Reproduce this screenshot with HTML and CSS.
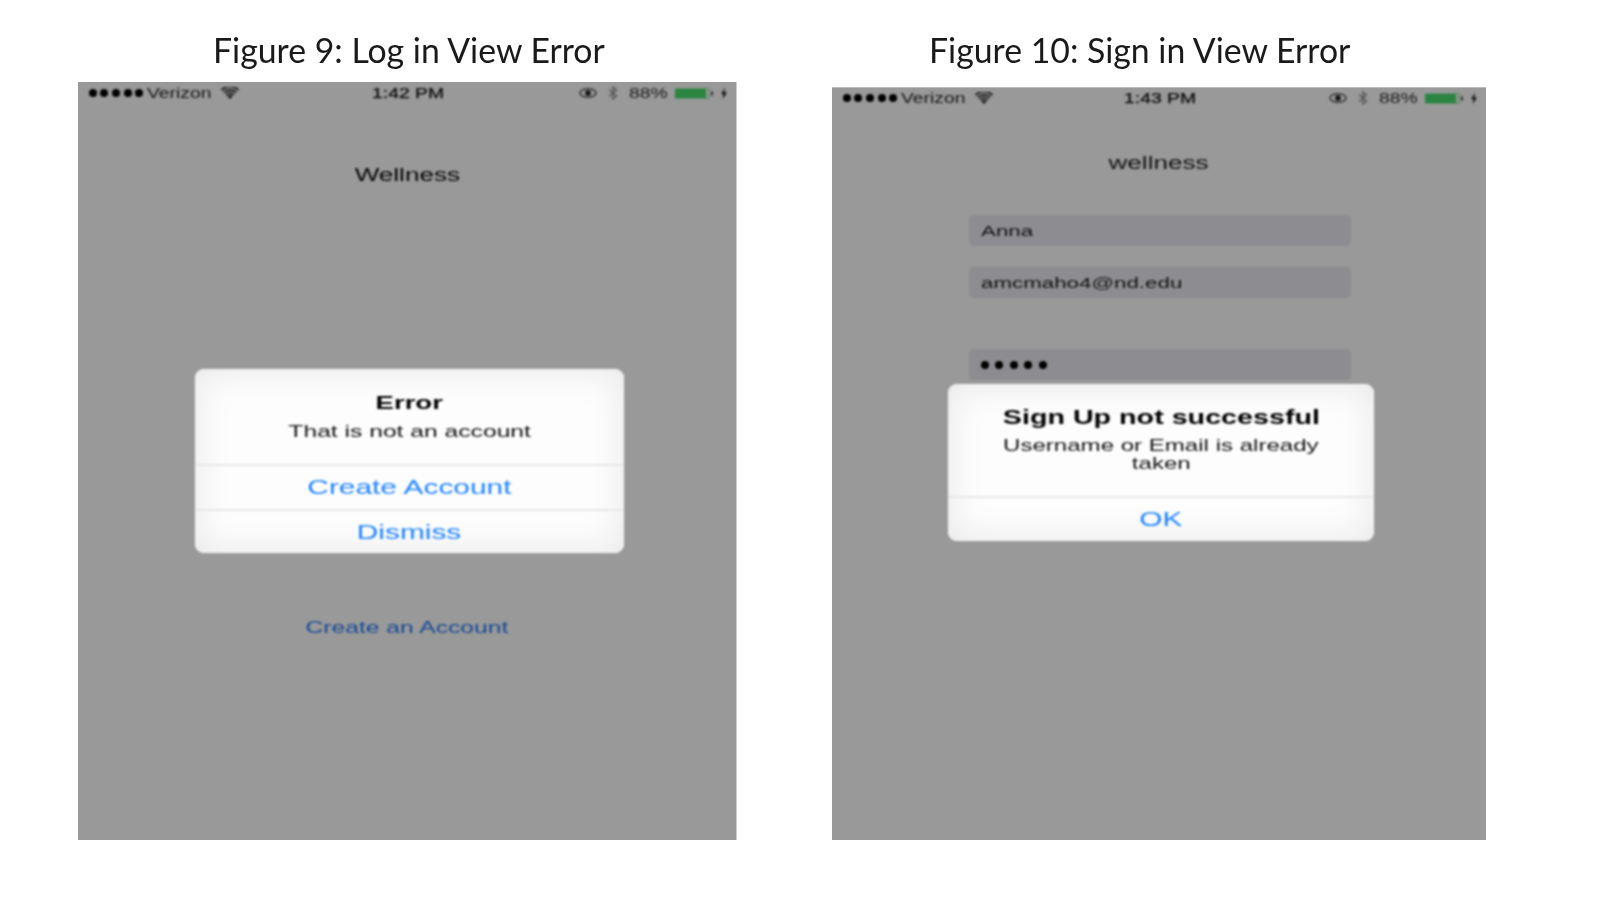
FILE: index.html
```html
<!DOCTYPE html>
<html lang="en">
<head>
<meta charset="utf-8">
<title>Figures 9 and 10</title>
<link rel="stylesheet" href="styles.css">
</head>
<body>
<main class="page">
  <figure class="figure figure-login">
    <figcaption class="caption caption-login">Figure 9: Log in View Error</figcaption>
    <div class="phone">
      <div class="status">
        <div class="status-left">
          <svg class="dots" viewBox="0 0 54 8"><circle cx="4" cy="4" r="4"/><circle cx="15" cy="4" r="4"/><circle cx="27" cy="4" r="4"/><circle cx="39" cy="4" r="4"/><circle cx="50" cy="4" r="4"/></svg>
          <span class="status-text carrier">Verizon</span>
          <svg class="wifi" viewBox="0 0 20 12"><path d="M10 12 L7.6 9.2a3.6 3.6 0 0 1 4.8 0Z"/><path d="M5.7 7.2a6.4 6.4 0 0 1 8.6 0l-1.1 1.2a4.8 4.8 0 0 0-6.4 0Z"/><path d="M3.4 4.8a9.8 9.8 0 0 1 13.2 0l-1.1 1.2a8.2 8.2 0 0 0-11 0Z"/><path d="M1 2.4a13.2 13.2 0 0 1 18 0l-1.1 1.2a11.6 11.6 0 0 0-15.8 0Z"/></svg>
        </div>
        <span class="status-text time">1:42 PM</span>
        <div class="status-right">
          <svg class="eye" viewBox="0 0 18 10"><ellipse cx="9" cy="5" rx="8" ry="4.2" fill="none" stroke="#222" stroke-width="1.3"/><circle cx="9" cy="5" r="2.8" fill="#111"/></svg>
          <svg class="bt" viewBox="0 0 12 14"><path d="M2 3.5 9.5 10 6 13V1l3.5 3L2 10.5" fill="none" stroke="#555" stroke-width="1.3"/></svg>
          <span class="status-text pct">88%</span>
          <svg class="battery" viewBox="0 0 40 11"><rect x="0" y="0.5" width="35" height="10" rx="1" fill="#2a8540"/><rect x="31" y="1" width="3.5" height="9" fill="#8f948f"/><rect x="36" y="3.5" width="2" height="4" fill="#333"/></svg>
          <svg class="bolt" viewBox="0 0 8 11"><path d="M5 0 1 6h2.4L2.6 11 7 4.6H4.4Z" fill="#111"/></svg>
        </div>
      </div>
      <h1 class="app-title title-login"><span class="wide">Wellness</span></h1>
      <a class="create-link"><span class="wide">Create an Account</span></a>
      <div class="alert alert-login">
        <div class="alert-body">
          <h2 class="alert-title"><span class="wide">Error</span></h2>
          <p class="alert-msg"><span class="wide">That is not an account</span></p>
        </div>
        <div class="alert-btn btn-first"><span class="wide">Create Account</span></div>
        <div class="alert-btn btn-last"><span class="wide">Dismiss</span></div>
      </div>
    </div>
  </figure>

  <figure class="figure figure-signup">
    <figcaption class="caption caption-signup">Figure 10: Sign in View Error</figcaption>
    <div class="phone phone-soft">
      <div class="status">
        <div class="status-left">
          <svg class="dots" viewBox="0 0 54 8"><circle cx="4" cy="4" r="4"/><circle cx="15" cy="4" r="4"/><circle cx="27" cy="4" r="4"/><circle cx="39" cy="4" r="4"/><circle cx="50" cy="4" r="4"/></svg>
          <span class="status-text carrier">Verizon</span>
          <svg class="wifi" viewBox="0 0 20 12"><path d="M10 12 L7.6 9.2a3.6 3.6 0 0 1 4.8 0Z"/><path d="M5.7 7.2a6.4 6.4 0 0 1 8.6 0l-1.1 1.2a4.8 4.8 0 0 0-6.4 0Z"/><path d="M3.4 4.8a9.8 9.8 0 0 1 13.2 0l-1.1 1.2a8.2 8.2 0 0 0-11 0Z"/><path d="M1 2.4a13.2 13.2 0 0 1 18 0l-1.1 1.2a11.6 11.6 0 0 0-15.8 0Z"/></svg>
        </div>
        <span class="status-text time">1:43 PM</span>
        <div class="status-right">
          <svg class="eye" viewBox="0 0 18 10"><ellipse cx="9" cy="5" rx="8" ry="4.2" fill="none" stroke="#222" stroke-width="1.3"/><circle cx="9" cy="5" r="2.8" fill="#111"/></svg>
          <svg class="bt" viewBox="0 0 12 14"><path d="M2 3.5 9.5 10 6 13V1l3.5 3L2 10.5" fill="none" stroke="#555" stroke-width="1.3"/></svg>
          <span class="status-text pct">88%</span>
          <svg class="battery" viewBox="0 0 40 11"><rect x="0" y="0.5" width="35" height="10" rx="1" fill="#2a8540"/><rect x="31" y="1" width="3.5" height="9" fill="#8f948f"/><rect x="36" y="3.5" width="2" height="4" fill="#333"/></svg>
          <svg class="bolt" viewBox="0 0 8 11"><path d="M5 0 1 6h2.4L2.6 11 7 4.6H4.4Z" fill="#111"/></svg>
        </div>
      </div>
      <h1 class="app-title title-signup"><span class="wide">wellness</span></h1>
      <div class="fields">
        <div class="field"><span class="wide-left">Anna</span></div>
        <div class="field"><span class="wide-left">amcmaho4@nd.edu</span></div>
        <div class="field field-password">
          <svg class="pw-dots" viewBox="0 0 66 8"><circle cx="4" cy="4" r="4"/><circle cx="18" cy="4" r="4"/><circle cx="33" cy="4" r="4"/><circle cx="47" cy="4" r="4"/><circle cx="62" cy="4" r="4"/></svg>
        </div>
      </div>
      <div class="alert alert-signup">
        <div class="alert-body body-signup">
          <h2 class="alert-title title-long"><span class="wide">Sign Up not successful</span></h2>
          <p class="alert-msg msg-signup"><span class="wide">Username or Email is already</span><br><span class="wide">taken</span></p>
        </div>
        <div class="alert-btn btn-first btn-ok"><span class="wide">OK</span></div>
      </div>
    </div>
  </figure>
</main>
</body>
</html>
```

FILE: styles.css
```css
* { box-sizing: border-box; }
html, body { margin: 0; padding: 0; background: #fff; }
body { width: 1598px; height: 918px; overflow: hidden; font-family: "Liberation Sans", Arial, sans-serif; }

.page { display: flex; align-items: flex-end; height: 840px; padding-left: 78px; gap: 95px; }
.figure { margin: 0; display: flex; flex-direction: column; }
.figure-login { width: 659px; }
.figure-signup { width: 654px; }

.caption { font-family: Lato, "Open Sans", sans-serif; font-size: 33.8px; line-height: 40px; color: #1a1a1a; white-space: nowrap; filter: blur(0.3px); }
.caption-login { margin-left: 135px; margin-bottom: 12px; }
.caption-signup { margin-left: 97px; margin-bottom: 17px; }

.phone { position: relative; flex: 0 0 auto; background: #999; display: flex; flex-direction: column; align-items: center; }
.figure-login .phone { height: 758px; border-right: 1px solid #ccc; }
.figure-signup .phone { height: 753px; border-top: 1px solid #bbb; }
.figure-signup .status { margin-top: -1px; }

.status, .app-title, .create-link, .fields, .alert { filter: blur(0.8px); }

.wide, .wide-left { display: inline-block; transform: scaleX(1.45); white-space: nowrap; }
.wide-left { transform-origin: left center; }

.status { width: 100%; height: 22px; padding: 0 8px 0 11px; display: grid; grid-template-columns: 1fr auto 1fr; align-items: center; }
.status-left, .status-right { display: flex; align-items: center; }
.status-right { justify-content: flex-end; }
.status-text { font-size: 14px; line-height: 22px; color: #0d0d0d; white-space: nowrap; }
.dots { width: 54px; height: 8px; fill: #000; }
.carrier { margin-left: 4px; width: 64px; color: #161616; display: inline-block; transform: scaleX(1.38); transform-origin: left center; }
.wifi { width: 20px; height: 12px; margin-left: 9px; fill: #1c1c1c; stroke: #1c1c1c; stroke-width: 0.3; }
.time { transform: scaleX(1.38); -webkit-text-stroke: 0.25px #0d0d0d; }
.eye { width: 18px; height: 10px; }
.bt { width: 12px; height: 14px; margin-left: 10px; }
.pct { margin-left: 10px; width: 40px; transform: scaleX(1.38); transform-origin: left center; color: #1a1a1a; }
.battery { width: 40px; height: 11px; margin-left: 6px; }
.bolt { width: 8px; height: 11px; margin-left: 5px; }

.app-title { margin: 0; font-weight: 400; font-size: 18px; line-height: 24px; color: #050505; text-align: center; }
.title-login { margin-top: 59px; }
.title-signup { margin-top: 42px; color: #111; }

.create-link { margin-top: 430px; font-size: 17px; line-height: 22px; color: #164a94; }

.fields { display: flex; flex-direction: column; width: 382px; margin: 40px 0 0 2px; }
.field { height: 31px; margin-bottom: 21px; padding-left: 12px; background: #8d8d91; border-radius: 5px; font-size: 15.4px; line-height: 30px; color: #111; display: flex; align-items: center; }
.field-password { margin-top: 30px; margin-bottom: 0; }
.pw-dots { width: 66px; height: 8px; fill: #000; }

.alert { position: absolute; background: #fdfdfd; border-radius: 9px; text-align: center; box-shadow: 0 0 1px #d6d6d6, inset 0 0 36px #e6e6e6; }
.alert-login { left: 117px; top: 287px; width: 429px; height: 184px; }
.alert-signup { left: 116px; top: 296px; width: 426px; height: 157px; }
.alert-body { height: 95px; padding-top: 21px; }
.body-signup { height: 112px; padding-top: 20px; }
.alert-title { margin: 0; font-size: 19px; line-height: 26px; font-weight: 700; color: #000; }
.title-long { font-size: 19.8px; }
.alert-msg { margin: 7px 0 0; font-size: 17px; line-height: 18px; color: #111; }
.msg-signup { margin-top: 7px; font-size: 16.6px; }
.alert-btn { font-size: 20.6px; line-height: 41px; color: #1f84ff; border-top: 2px solid #e7e7e7; height: 45px; }
.btn-last { height: 44px; }
.btn-ok { height: 45px; }
```
